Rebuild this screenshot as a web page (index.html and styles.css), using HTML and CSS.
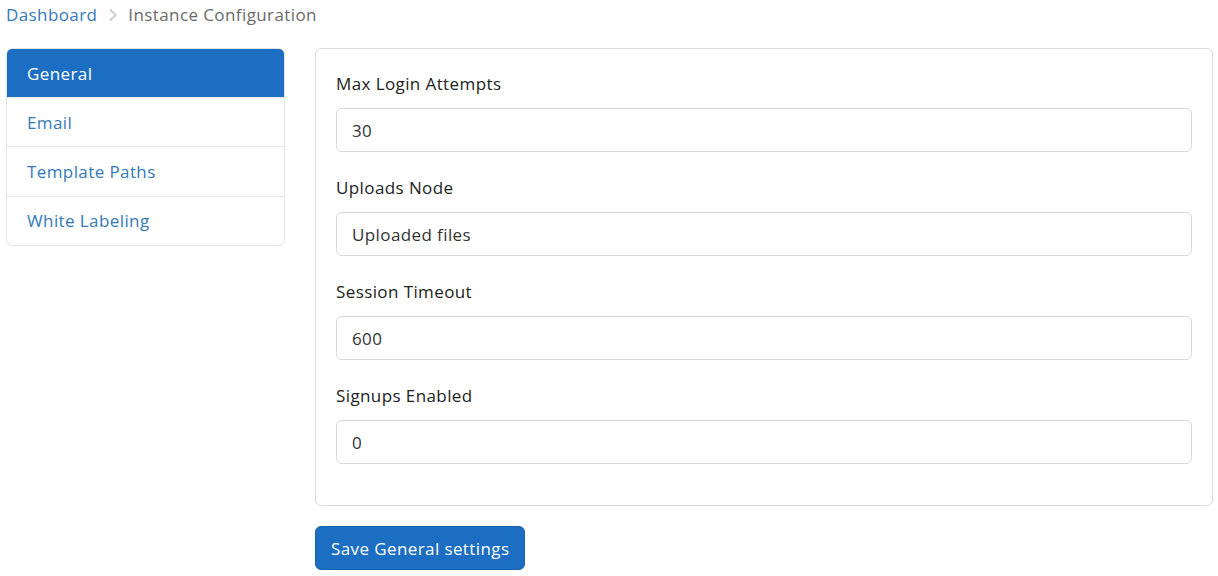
FILE: index.html
```html
<!DOCTYPE html>
<html>
<head>
<meta charset="utf-8">
<link rel="stylesheet" href="styles.css">
</head>
<body>
<nav class="crumbs">
  <a class="crumb-link" href="#">Dashboard</a>
  <svg class="chev" width="10" height="14" viewBox="0 0 10 14"><polyline points="2,1.5 7.5,7 2,12.5" fill="none" stroke="#cfcfcf" stroke-width="2"/></svg>
  <span class="crumb-current">Instance Configuration</span>
</nav>
<div class="layout">
  <ul class="side">
    <li class="side-item active">General</li>
    <li class="side-item">Email</li>
    <li class="side-item">Template Paths</li>
    <li class="side-item">White Labeling</li>
  </ul>
  <div class="main">
    <div class="panel">
      <div class="group">
        <label class="lbl">Max Login Attempts</label>
        <input class="inp" value="30">
      </div>
      <div class="group">
        <label class="lbl">Uploads Node</label>
        <input class="inp" value="Uploaded files">
      </div>
      <div class="group">
        <label class="lbl">Session Timeout</label>
        <input class="inp" value="600">
      </div>
      <div class="group">
        <label class="lbl">Signups Enabled</label>
        <input class="inp" value="0">
      </div>
    </div>
    <button class="btn">Save General settings</button>
  </div>
</div>
</body>
</html>
```
FILE: styles.css
```css
* { box-sizing: border-box; }
html, body { margin: 0; padding: 0; background: #fff; }
body {
  font-family: "Open Sans", Lato, sans-serif;
  font-size: 17px;
  letter-spacing: 0.4px;
  color: #333;
  padding: 0 5px 0 6px;
}
.crumbs {
  display: flex;
  align-items: center;
  height: 29px;
}
.crumb-link { color: #3379b8; text-decoration: none; }
.chev { margin: 0 10px 0 11px; }
.crumb-current { color: #6a6a6a; }
.layout {
  display: flex;
  gap: 30px;
  margin-top: 19px;
  align-items: flex-start;
}
.side {
  list-style: none;
  margin: 0;
  padding: 0;
  width: 279px;
  flex: none;
  border: 1px solid #e3e3e3;
  border-radius: 6px;
  overflow: hidden;
}
.side-item {
  height: 49.3px;
  display: flex;
  align-items: center;
  padding-left: 20px;
  color: #3379b8;
  border-top: 1px solid #e8e8e8;
}
.side-item:first-child { border-top: none; }
.side-item.active {
  background: #1b6ec2;
  color: #fff;
  height: 48px;
}
.main { flex: 1; }
.panel {
  border: 1px solid #d9d9d9;
  border-radius: 6px;
  padding: 23px 20px 17px 20px;
}
.group { margin-bottom: 24px; }
.lbl {
  display: block;
  line-height: 24px;
  margin-bottom: 12px;
  color: #222;
}
.inp {
  display: block;
  width: 100%;
  height: 44px;
  border: 1px solid #d6d6d6;
  border-radius: 6px;
  padding: 0 15px;
  font: inherit;
  letter-spacing: inherit;
  color: #333;
  outline: none;
}
.btn {
  margin-top: 20px;
  height: 44px;
  padding: 0 15px;
  background: #1b6ec2;
  border: 1px solid #1861ac;
  border-radius: 6px;
  color: #fff;
  font: inherit;
  letter-spacing: inherit;
}
```
